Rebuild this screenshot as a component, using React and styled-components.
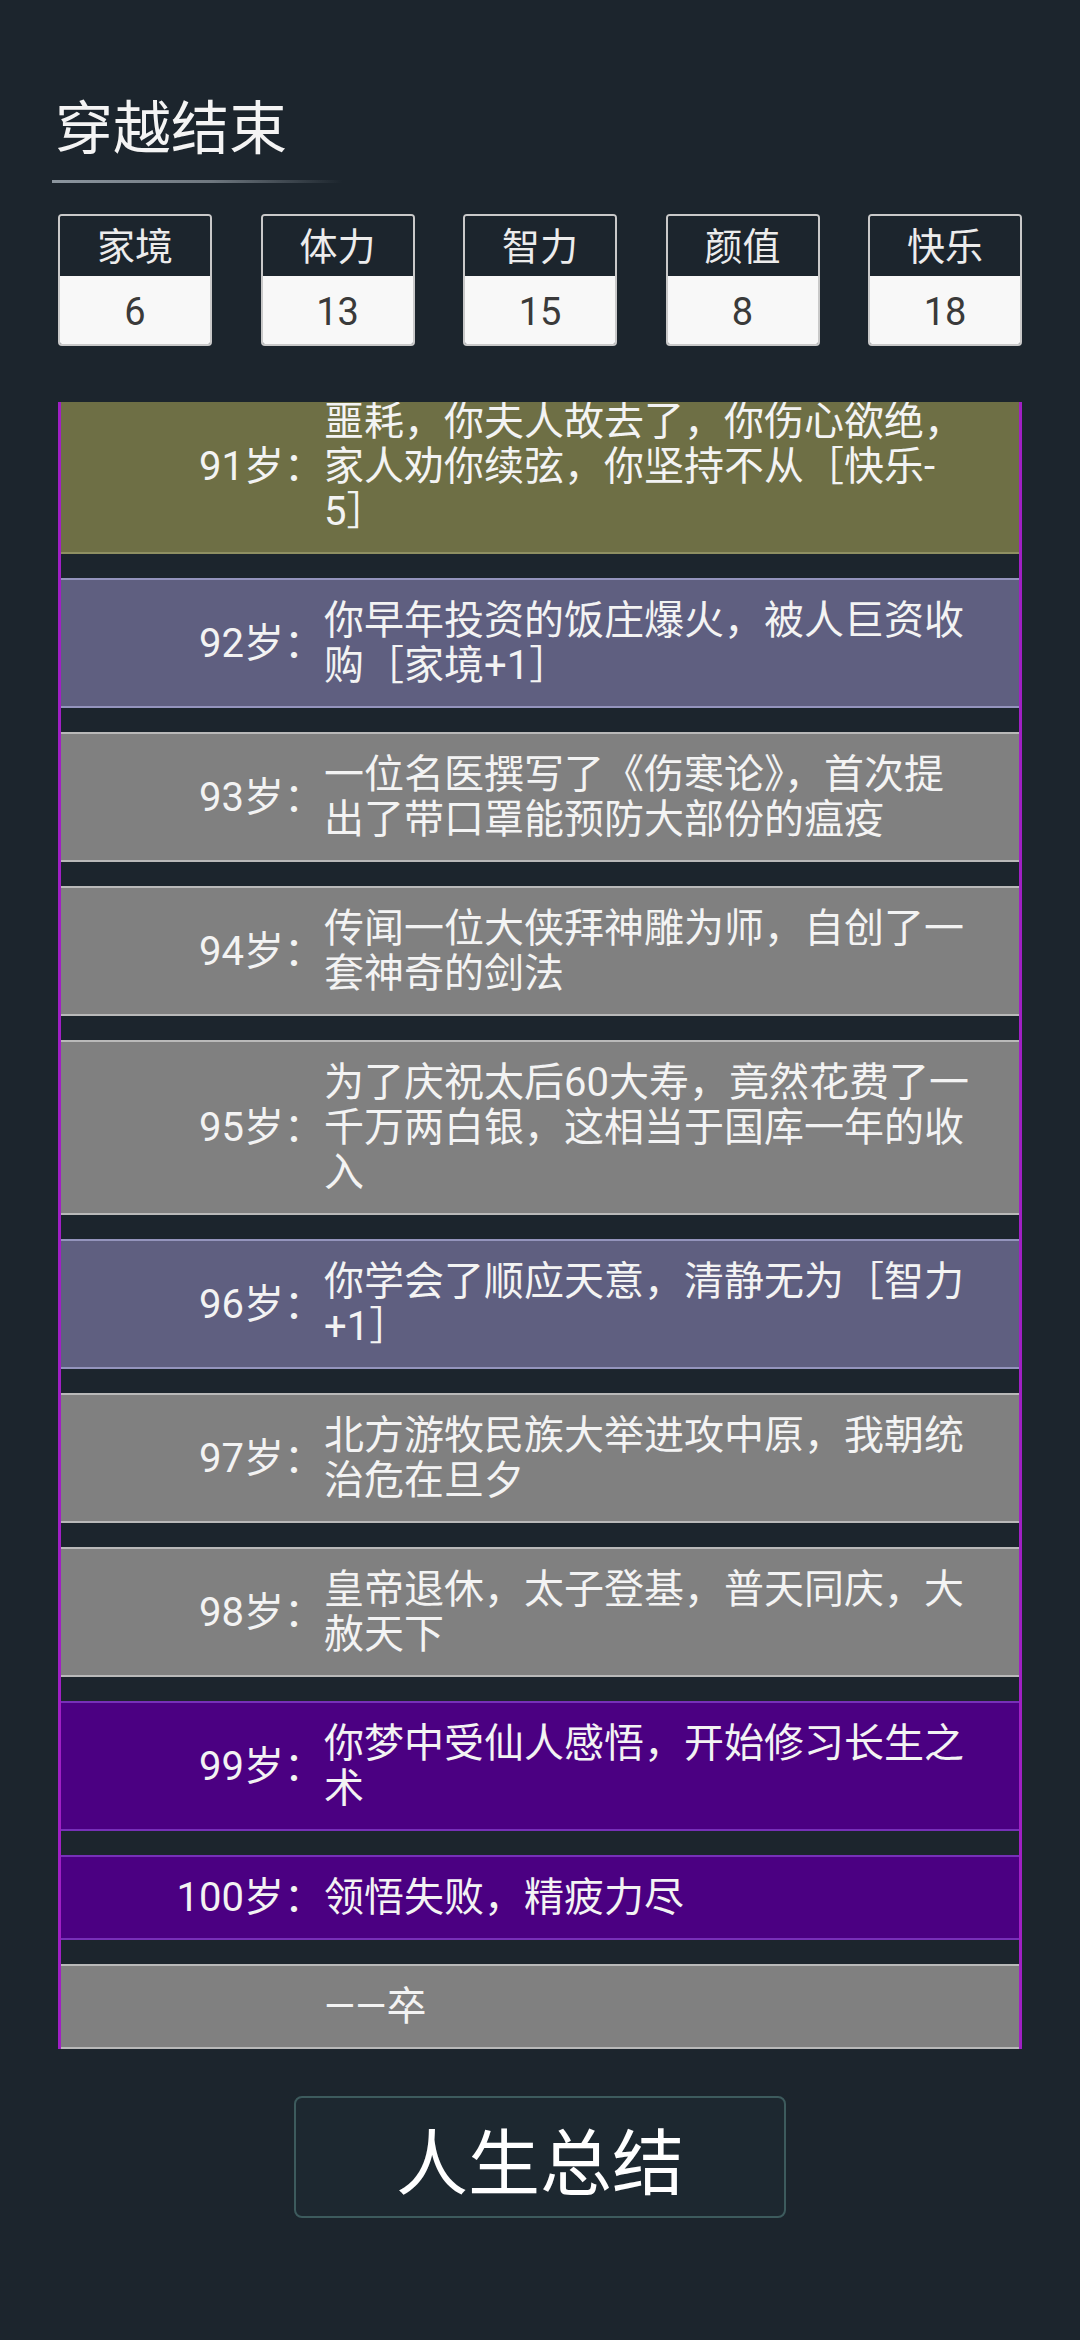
import React from "react";
import styled, { createGlobalStyle } from "styled-components";

const GlobalStyle = createGlobalStyle`
  html, body {
    margin: 0;
    padding: 0;
    background: #1c252d;
  }
  body {
    font-family: "Roboto", "Noto Sans CJK SC", sans-serif;
    color: #f2f2f2;
  }
`;

const tones = {
  bad: { bg: "#6e6f45", line: "#8e8f62" },
  good: { bg: "#5f5f80", line: "#9494bd" },
  plain: { bg: "#808080", line: "#b9b9b9" },
  rare: { bg: "#4b0082", line: "#7730b8" },
};

const Page = styled.div`
  min-height: 2340px;
  box-sizing: border-box;
  padding: 96px 0 0;
  display: flex;
  flex-direction: column;
`;

const Title = styled.h1`
  margin: 0;
  padding-left: 55px;
  font-size: 58px;
  line-height: 66px;
  font-weight: 400;
  color: #f4f4f4;
`;

const TitleLine = styled.div`
  margin: 18px 0 0 52px;
  width: 290px;
  height: 3px;
  background: linear-gradient(90deg, #8c969f 0%, #6f7880 55%, rgba(28, 37, 45, 0) 100%);
`;

const Stats = styled.div`
  margin-top: 31px;
  padding: 0 58px;
  display: flex;
  justify-content: space-between;
`;

const StatBox = styled.div`
  width: 154px;
  height: 132px;
  box-sizing: border-box;
  border: 2px solid #c9c9c9;
  border-radius: 4px;
  overflow: hidden;
  display: flex;
  flex-direction: column;
`;

const StatLabel = styled.div`
  height: 60px;
  box-sizing: border-box;
  padding-bottom: 6px;
  background: #1c252d;
  display: flex;
  align-items: center;
  justify-content: center;
  font-size: 38px;
  color: #ececec;
`;

const StatValue = styled.div`
  flex: 1;
  box-sizing: border-box;
  padding-top: 4px;
  background: #f8f8f8;
  display: flex;
  align-items: center;
  justify-content: center;
  font-size: 38px;
  color: #3a3a3a;
`;

const Log = styled.div`
  margin: 56px 58px 0;
  height: 1647px;
  box-sizing: border-box;
  border-left: 3px solid #a01fc4;
  border-right: 3px solid #a01fc4;
  overflow: hidden;
  display: flex;
  flex-direction: column;
  justify-content: flex-end;
  gap: 24px;
`;

const Entry = styled.div`
  flex-shrink: 0;
  margin: 0 -3px;
  box-sizing: border-box;
  padding: 18px 48px 18px 0;
  background: ${(p) => tones[p.$tone].bg};
  border: 2px solid ${(p) => tones[p.$tone].line};
  display: grid;
  grid-template-columns: 264px 1fr;
  align-items: center;
  font-size: 40px;
  line-height: 45px;
  color: #f3f3f3;
`;

const Age = styled.div`
  text-align: right;
  white-space: nowrap;
`;

const Text = styled.div``;

const Footer = styled.div`
  margin-top: 47px;
  display: flex;
  justify-content: center;
`;

const SummaryButton = styled.button`
  width: 492px;
  height: 122px;
  box-sizing: border-box;
  border: 2px solid #3d5b5d;
  border-radius: 8px;
  background: #1d2830;
  color: #ffffff;
  font-family: "Roboto", "Noto Sans CJK SC", sans-serif;
  font-size: 72px;
  cursor: pointer;
`;

const stats = [
  { name: "家境", value: 6 },
  { name: "体力", value: 13 },
  { name: "智力", value: 15 },
  { name: "颜值", value: 8 },
  { name: "快乐", value: 18 },
];

const events = [
  { age: 91, tone: "bad", text: "噩耗，你夫人故去了，你伤心欲绝，家人劝你续弦，你坚持不从［快乐-\u200B5］" },
  { age: 92, tone: "good", text: "你早年投资的饭庄爆火，被人巨资收购［家境+1］" },
  { age: 93, tone: "plain", text: "一位名医撰写了《伤寒论》，首次提出了带口罩能预防大部份的瘟疫" },
  { age: 94, tone: "plain", text: "传闻一位大侠拜神雕为师，自创了一套神奇的剑法" },
  { age: 95, tone: "plain", text: "为了庆祝太后60大寿，竟然花费了一千万两白银，这相当于国库一年的收入" },
  { age: 96, tone: "good", text: "你学会了顺应天意，清静无为［智力+1］" },
  { age: 97, tone: "plain", text: "北方游牧民族大举进攻中原，我朝统治危在旦夕" },
  { age: 98, tone: "plain", text: "皇帝退休，太子登基，普天同庆，大赦天下" },
  { age: 99, tone: "rare", text: "你梦中受仙人感悟，开始修习长生之术" },
  { age: 100, tone: "rare", text: "领悟失败，精疲力尽" },
  { age: null, tone: "plain", text: "——卒" },
];

export default function App() {
  return (
    <>
      <GlobalStyle />
      <Page>
        <Title>穿越结束</Title>
        <TitleLine />
        <Stats>
          {stats.map((s) => (
            <StatBox key={s.name}>
              <StatLabel>{s.name}</StatLabel>
              <StatValue>{s.value}</StatValue>
            </StatBox>
          ))}
        </Stats>
        <Log>
          {events.map((e, i) => (
            <Entry key={i} $tone={e.tone}>
              <Age>{e.age ? `${e.age}岁：` : ""}</Age>
              <Text>{e.text}</Text>
            </Entry>
          ))}
        </Log>
        <Footer>
          <SummaryButton>人生总结</SummaryButton>
        </Footer>
      </Page>
    </>
  );
}
